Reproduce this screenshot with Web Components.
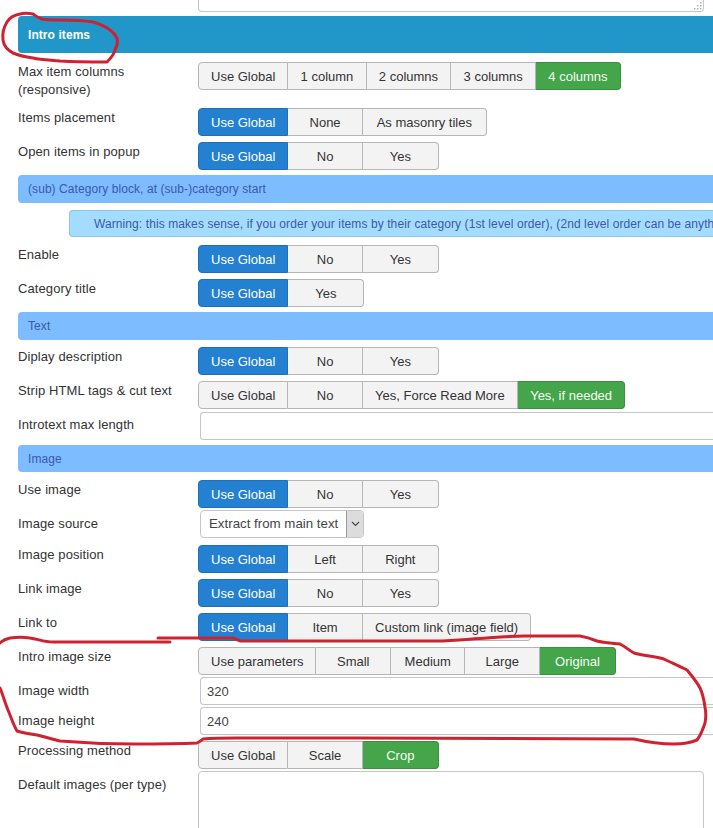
<!DOCTYPE html>
<html lang="en">
<head>
<meta charset="utf-8">
<title>Intro items</title>
<style>
  html, body { margin:0; height:100%; overflow:hidden; background:#fff; }
  body { font:13px/18px "Liberation Sans", Arial, sans-serif; color:#333; }
</style>
</head>
<body>
<template id="tpl-sheet">
  <style>
    :host { display:block; position:relative; width:713px; height:828px; overflow:hidden; }
    .flow { display:flex; flex-direction:column; width:713px; padding-left:18px; box-sizing:border-box; }
    svg { position:absolute; left:0; top:0; width:713px; height:828px; pointer-events:none; }
    path { fill:none; stroke:#cf2230; stroke-width:3; stroke-linecap:round; stroke-linejoin:round; }
  </style>
  <div class="flow"><slot></slot></div>
  <!-- hand drawn marker on top of the form -->
  <svg viewBox="0 0 713 828" aria-hidden="true">
    <path d="M33,14 C28,13 24,13 20,14 C14,15 10,17 7,22 C4,27 2,33 3,40 C4,47 8,50 13,53 C20,56 26,57 33,58 C42,60 50,60 60,61 C76,62 92,62 107,62 C111,58 114,55 115,50 C117,46 118,42 117,38 C115,34 113,32 110,30 C105,26 100,24 93,22 C82,20 72,20 60,20 C53,20 47,20 42,19 C38,18 36,16 33,14"/>
    <path d="M0,643 C3,640 6,639 10,638 C17,637 24,637 30,638 C38,639 44,642 53,642 L170,642"/>
    <path d="M158,638 L233,638 C236,639 238,640 240,641 L437,641 C453,641 470,639 487,638 C500,637 512,636 524,636 L580,636 C586,637 592,639 597,641 C605,643 613,643 620,644 C626,647 630,651 634,653 C644,656 654,656 664,659 C672,663 680,666 687,670 C692,676 697,682 700,688 C703,694 704,700 705,707 C706,712 706,718 705,723 C703,729 701,735 697,740 C690,743 682,744 674,744 C660,744 647,742 634,739 L357,738 L237,738 C226,738 214,738 203,739 C201,741 199,742 197,743 C176,744 154,744 133,744 C108,744 84,743 60,741 C52,739 45,737 37,735 C30,734 23,733 17,731 C13,724 11,717 8,710 C5,703 3,695 0,688"/>
  </svg>
</template>

<template id="tpl-bar">
  <style>
    :host { display:flex; align-items:center; box-sizing:border-box; height:28px; padding-left:10px;
            background:#7dbcff; color:#3c58ad; font-size:12px; letter-spacing:.07px; border-radius:4px 0 0 4px;
            white-space:nowrap; overflow:hidden; }
    :host([kind="main"]) { height:37px; background:#2196c9; color:#fff; font-weight:bold; }
    :host([kind="warn"]) { height:27px; margin-left:51px; padding-left:24px; background:#a3dcff; color:#3c58ad;
            border:1px solid #8cc5e6; border-right:0; letter-spacing:.09px; }
  </style>
  <slot></slot>
</template>

<template id="tpl-field">
  <style>
    :host { display:grid; grid-template-columns:180px 1fr; align-items:start; }
    .label { margin-top:var(--label-top, 1px); font-size:13px; line-height:18px; letter-spacing:.1px; color:#333; white-space:nowrap; }
    .control { display:flex; min-width:0; }
  </style>
  <div class="label"><slot name="label"></slot></div>
  <div class="control"><slot></slot></div>
</template>

<template id="tpl-seg">
  <style>
    :host { display:inline-flex; height:28px; }
  </style>
  <slot></slot>
</template>

<template id="tpl-opt">
  <style>
    :host { display:flex; align-items:center; justify-content:center; box-sizing:border-box; height:28px; min-width:74.5px;
            padding:1px 12.25px 0; background:#f3f3f3; color:#333; font-size:13px; white-space:nowrap;
            border:1px solid #b6b6b6; border-left-width:0; }
    :host(:first-child) { border-left-width:1px; border-radius:4px 0 0 4px; padding:1px 12px 0; }
    :host(:last-child) { border-radius:0 4px 4px 0; min-width:76px; }
    :host([on="blue"]) { background:#2480d0; color:#fff; border-color:#1f70b8; }
    :host([on="green"]) { background:#45a54a; color:#f2fff2; border-color:#3a8f40; }
  </style>
  <slot></slot>
</template>

<template id="tpl-input">
  <style>
    :host { display:flex; align-items:center; box-sizing:border-box; height:28px; width:540px; margin-left:2px;
            padding:1px 0 0 6px; background:#fff; color:#444; font-size:13px;
            border:1px solid #c6c6c6; border-right:0; border-radius:4px 0 0 4px; }
  </style>
  <slot></slot>
</template>

<template id="tpl-select">
  <style>
    :host { display:inline-flex; box-sizing:border-box; height:28px; margin-left:2px; background:#fff; color:#444;
            font-size:13.3px; border:1px solid #c6c6c6; border-radius:4px; overflow:hidden; }
    .val { display:flex; align-items:center; padding:0 8px; white-space:nowrap; }
    .arrow { display:flex; align-items:center; justify-content:center; width:16px; background:#dcdcdc; border-left:1px solid #9a9a9a; }
  </style>
  <div class="val"><slot></slot></div>
  <div class="arrow"><svg width="9" height="6" viewBox="0 0 9 6"><path d="M1,1 L4.5,4.5 L8,1" fill="none" stroke="#444" stroke-width="1.1"/></svg></div>
</template>

<template id="tpl-area">
  <style>
    :host { display:block; position:relative; box-sizing:border-box; width:506px; height:var(--h, 70px); background:#fff;
            border:1px solid #c6c6c6; border-radius:4px; }
    :host([cut]) { border-top:0; border-radius:0 0 4px 4px; }
    svg { position:absolute; right:1px; bottom:1px; }
  </style>
  <svg width="9" height="9" viewBox="0 0 9 9" fill="#a8a8a8"><rect x="7" y="1" width="1.4" height="1.4"/><rect x="4" y="4" width="1.4" height="1.4"/><rect x="7" y="4" width="1.4" height="1.4"/><rect x="1" y="7" width="1.4" height="1.4"/><rect x="4" y="7" width="1.4" height="1.4"/><rect x="7" y="7" width="1.4" height="1.4"/></svg>
</template>

<script>
  // every element is just its template stamped into an open shadow root
  const tags = {
    'form-sheet': 'tpl-sheet', 'form-bar': 'tpl-bar', 'form-field': 'tpl-field',
    'seg-group': 'tpl-seg', 'seg-opt': 'tpl-opt', 'text-box': 'tpl-input',
    'select-box': 'tpl-select', 'area-box': 'tpl-area'
  };
  Object.entries(tags).forEach(([tag, id]) => {
    customElements.define(tag, class extends HTMLElement {
      constructor() {
        super();
        this.attachShadow({ mode: 'open' }).appendChild(document.getElementById(id).content.cloneNode(true));
      }
    });
  });
</script>

<form-sheet>
  <form-field><span slot="label"></span><area-box cut style="--h:12px"></area-box></form-field>

  <form-bar kind="main" style="margin-top:4px">Intro items</form-bar>
  <form-field style="margin-top:9px"><span slot="label">Max item columns<br>(responsive)</span>
    <seg-group><seg-opt>Use Global</seg-opt><seg-opt>1 column</seg-opt><seg-opt>2 columns</seg-opt><seg-opt>3 columns</seg-opt><seg-opt on="green">4 columns</seg-opt></seg-group></form-field>
  <form-field style="margin-top:9px"><span slot="label">Items placement</span>
    <seg-group><seg-opt on="blue">Use Global</seg-opt><seg-opt>None</seg-opt><seg-opt style="min-width:124px">As masonry tiles</seg-opt></seg-group></form-field>
  <form-field style="margin-top:6px"><span slot="label">Open items in popup</span>
    <seg-group><seg-opt on="blue">Use Global</seg-opt><seg-opt>No</seg-opt><seg-opt>Yes</seg-opt></seg-group></form-field>

  <form-bar style="margin-top:5px">(sub) Category block, at (sub-)category start</form-bar>
  <form-bar kind="warn" style="margin-top:7px">Warning: this makes sense, if you order your items by their category (1st level order), (2nd level order can be anyth</form-bar>
  <form-field style="margin-top:8px"><span slot="label">Enable</span>
    <seg-group><seg-opt on="blue">Use Global</seg-opt><seg-opt>No</seg-opt><seg-opt>Yes</seg-opt></seg-group></form-field>
  <form-field style="margin-top:6px"><span slot="label">Category title</span>
    <seg-group><seg-opt on="blue">Use Global</seg-opt><seg-opt>Yes</seg-opt></seg-group></form-field>

  <form-bar style="margin-top:5px">Text</form-bar>
  <form-field style="margin-top:7px"><span slot="label">Diplay description</span>
    <seg-group><seg-opt on="blue">Use Global</seg-opt><seg-opt>No</seg-opt><seg-opt>Yes</seg-opt></seg-group></form-field>
  <form-field style="margin-top:6px"><span slot="label">Strip HTML tags &amp; cut text</span>
    <seg-group><seg-opt>Use Global</seg-opt><seg-opt>No</seg-opt><seg-opt>Yes, Force Read More</seg-opt><seg-opt on="green">Yes, if needed</seg-opt></seg-group></form-field>
  <form-field style="margin-top:3px;--label-top:4px"><span slot="label">Introtext max length</span><text-box></text-box></form-field>

  <form-bar style="margin-top:5px;height:27px">Image</form-bar>
  <form-field style="margin-top:8px"><span slot="label">Use image</span>
    <seg-group><seg-opt on="blue">Use Global</seg-opt><seg-opt>No</seg-opt><seg-opt>Yes</seg-opt></seg-group></form-field>
  <form-field style="margin-top:2px;--label-top:5px"><span slot="label">Image source</span><select-box>Extract from main text</select-box></form-field>
  <form-field style="margin-top:7px"><span slot="label">Image position</span>
    <seg-group><seg-opt on="blue">Use Global</seg-opt><seg-opt>Left</seg-opt><seg-opt>Right</seg-opt></seg-group></form-field>
  <form-field style="margin-top:6px"><span slot="label">Link image</span>
    <seg-group><seg-opt on="blue">Use Global</seg-opt><seg-opt>No</seg-opt><seg-opt>Yes</seg-opt></seg-group></form-field>
  <form-field style="margin-top:6px"><span slot="label">Link to</span>
    <seg-group><seg-opt on="blue">Use Global</seg-opt><seg-opt>Item</seg-opt><seg-opt>Custom link (image field)</seg-opt></seg-group></form-field>
  <form-field style="margin-top:6px"><span slot="label">Intro image size</span>
    <seg-group><seg-opt>Use parameters</seg-opt><seg-opt>Small</seg-opt><seg-opt>Medium</seg-opt><seg-opt>Large</seg-opt><seg-opt on="green">Original</seg-opt></seg-group></form-field>
  <form-field style="margin-top:2px;--label-top:5px"><span slot="label">Image width</span><text-box>320</text-box></form-field>
  <form-field style="margin-top:2px;--label-top:5px"><span slot="label">Image height</span><text-box>240</text-box></form-field>
  <form-field style="margin-top:6px"><span slot="label">Processing method</span>
    <seg-group><seg-opt>Use Global</seg-opt><seg-opt>Scale</seg-opt><seg-opt on="green">Crop</seg-opt></seg-group></form-field>
  <form-field style="margin-top:2px;--label-top:5px"><span slot="label">Default images (per type)</span><area-box></area-box></form-field>
</form-sheet>
</body>
</html>
